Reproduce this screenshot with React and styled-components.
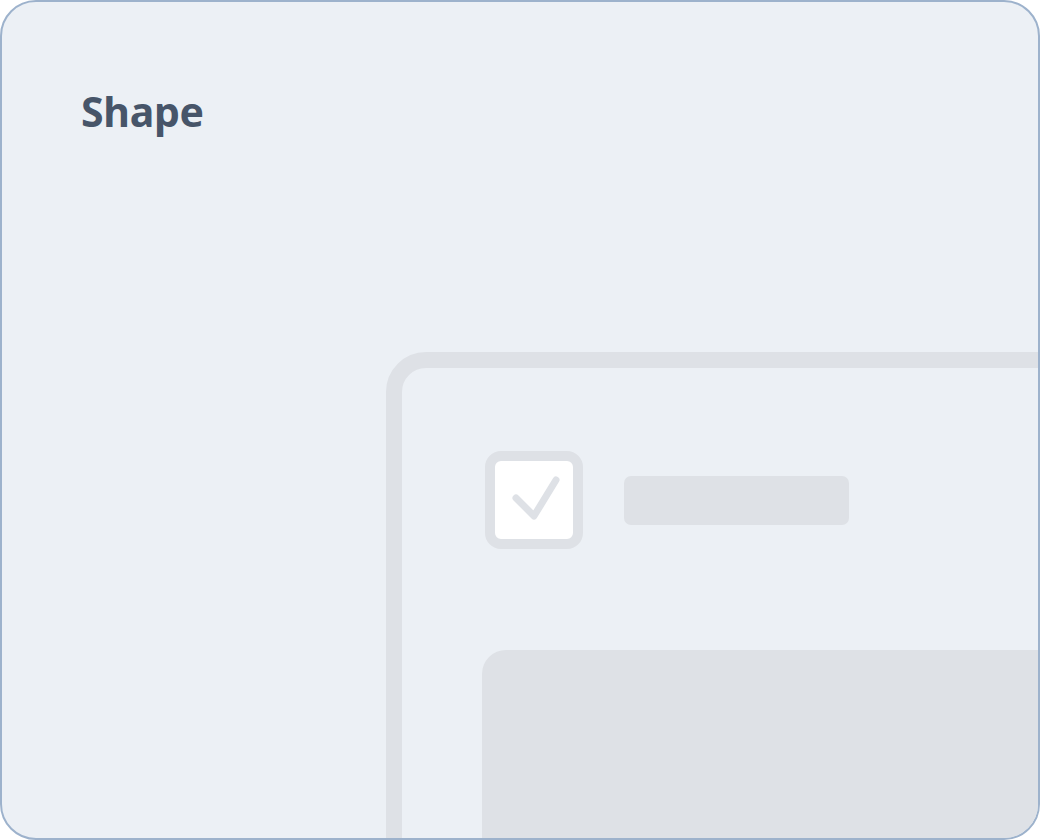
import styled, { createGlobalStyle } from 'styled-components';

const GlobalStyle = createGlobalStyle`
  html, body {
    margin: 0;
    padding: 0;
    background: #ffffff;
  }
  * {
    box-sizing: border-box;
  }
`;

export const Card = styled.section`
  width: 1040px;
  height: 840px;
  background: #ecf0f5;
  border: 2px solid #9db2cc;
  border-radius: 36px;
  overflow: hidden;
  padding: 85px 0 0 79px;
  display: flex;
  flex-direction: column;
`;

export const Title = styled.h2`
  margin: 0;
  font-family: 'Noto Sans', 'Open Sans', sans-serif;
  font-weight: 700;
  font-size: 41px;
  line-height: 49px;
  color: #475569;
  letter-spacing: -0.3px;
`;

export const Preview = styled.div`
  margin: 216px 0 0 305px;
  width: 820px;
  height: 700px;
  flex-shrink: 0;
  border: 16px solid #dee1e6;
  border-radius: 40px;
  padding: 83px 0 0 83px;
  display: flex;
  flex-direction: column;
  gap: 101px;
`;

export const Row = styled.div`
  display: flex;
  align-items: center;
  gap: 41px;
`;

export const CheckBox = styled.div`
  width: 98px;
  height: 98px;
  border: 10px solid #dee1e6;
  border-radius: 16px;
  background: #ffffff;
  display: flex;
  align-items: center;
  justify-content: center;
  flex-shrink: 0;

  svg {
    display: block;
  }
`;

export const Line = styled.div`
  width: ${(p) => p.$w}px;
  height: 49px;
  border-radius: 7px;
  background: #dee1e6;
`;

export const Block = styled.div`
  width: 700px;
  height: 400px;
  margin-left: -3px;
  border-radius: 24px;
  background: #dee1e6;
`;

export default function App() {
  return (
    <>
      <GlobalStyle />
      <Card>
        <Title>Shape</Title>
        <Preview>
          <Row>
            <CheckBox>
              <svg width="78" height="78" viewBox="0 0 78 78" fill="none">
                <path
                  d="M21 37 L39 55 L61 19"
                  stroke="#dee1e6"
                  strokeWidth="7"
                  strokeLinecap="round"
                  strokeLinejoin="round"
                />
              </svg>
            </CheckBox>
            <Line $w={225} />
          </Row>
          <Block />
        </Preview>
      </Card>
    </>
  );
}
